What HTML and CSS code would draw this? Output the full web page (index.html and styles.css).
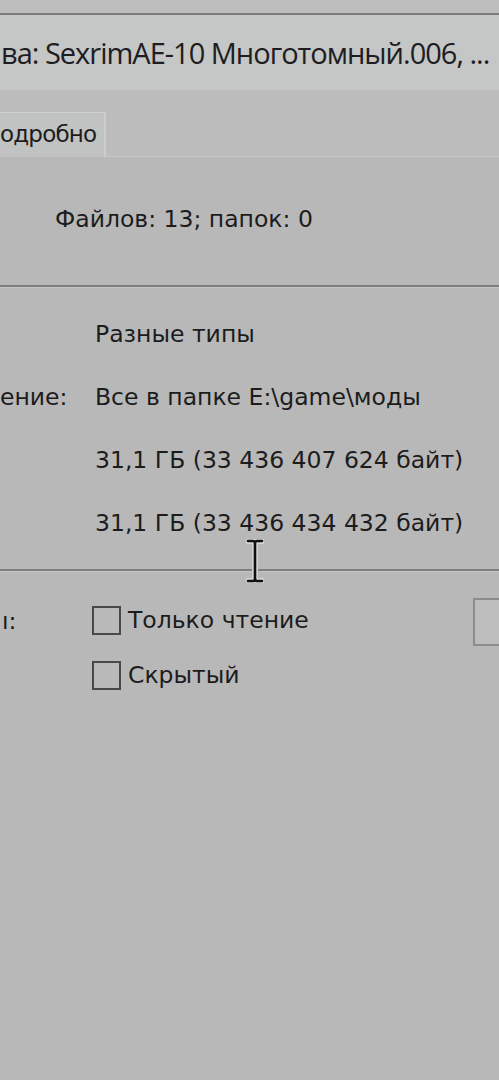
FILE: index.html
```html
<!DOCTYPE html>
<html lang="ru">
<head>
    <meta charset="UTF-8">
    <meta name="viewport" content="width=device-width, initial-scale=1.0">
    <title>Свойства</title>
    <link rel="stylesheet" href="styles.css">
</head>
<body>
    <div class="frame-top"></div>

    <!-- Window caption -->
    <div class="caption">ва: SexrimAE-10 Многотомный.006, ...</div>

    <!-- Tabs -->
    <div class="tabbar">
        <div class="tab">одробно</div>
    </div>

    <div class="panel">
        <div class="files-row">Файлов: 13; папок: 0</div>

        <div class="separator"></div>

        <div class="info">
            <div class="label"></div>
            <div class="value">Разные типы</div>
            <div class="label">ение:</div>
            <div class="value">Все в папке E:\game\моды</div>
            <div class="label"></div>
            <div class="value">31,1 ГБ (33 436 407 624 байт)</div>
            <div class="label"></div>
            <div class="value">31,1 ГБ (33 436 434 432 байт)</div>
        </div>

        <div class="separator"></div>

        <div class="attrs">
            <div class="label">ı:</div>
            <div class="checks">
                <label class="check"><span class="box"></span>Только чтение</label>
                <label class="check"><span class="box"></span>Скрытый</label>
            </div>
            <div class="side-btn"></div>
        </div>

        <!-- text cursor over the dialog -->
        <svg class="ibeam" width="18" height="44" viewBox="0 0 18 44">
            <path d="M2 2 H7 Q9 2 9 4 V40 Q9 42 7 42 H2 M16 2 H11 Q9 2 9 4 M9 40 Q9 42 11 42 H16" fill="none" stroke="#d4d4d4" stroke-width="6" stroke-linecap="round"/>
            <path d="M2 2 H7 Q9 2 9 4 V40 Q9 42 7 42 H2 M16 2 H11 Q9 2 9 4 M9 40 Q9 42 11 42 H16" fill="none" stroke="#111" stroke-width="2.6" stroke-linecap="round"/>
        </svg>
    </div>
</body>
</html>
```

FILE: styles.css
```css
body {
    margin: 0;
    padding: 0;
    background-color: #b8b8b8;
    font-family: "DejaVu Sans", Tahoma, sans-serif;
    color: #1c1c1c;
    overflow: hidden;
    height: 1080px;
}

.frame-top {
    height: 13px;
    background-color: #bdbdbd;
    border-bottom: 2px solid #7c7c7c;
}

.caption {
    height: 75px;
    box-sizing: border-box;
    padding: 21px 0 0 1px;
    background-color: #c5c6c6;
    font-family: "Open Sans", "Noto Sans", sans-serif;
    font-size: 29px;
    letter-spacing: -1px;
    line-height: 34px;
    color: #1d1d22;
    white-space: nowrap;
    overflow: hidden;
}

.tabbar {
    height: 67px;
    box-sizing: border-box;
    padding-top: 22px;
    background-color: #bcbcbc;
    border-bottom: 1px solid #c9c9c9;
}

.tab {
    width: 106px;
    height: 45px;
    box-sizing: border-box;
    padding-top: 7px;
    background-color: #c1c2c2;
    border-top: 1px solid #cfcfcf;
    border-right: 2px solid #cdcdcd;
    font-size: 23px;
    line-height: 28px;
    letter-spacing: -0.8px;
    white-space: nowrap;
    overflow: hidden;
}

.panel {
    position: relative;
}

.files-row {
    height: 128px;
    box-sizing: border-box;
    padding: 48px 0 0 55px;
    font-size: 23.5px;
    line-height: 28px;
}

.separator {
    height: 2px;
    background-color: #7e7e7e;
    border-bottom: 1px solid #c4c4c4;
}

.info {
    display: grid;
    grid-template-columns: 95px 1fr;
    grid-auto-rows: 63px;
    align-items: center;
    padding: 14px 0 15px;
    font-size: 23.5px;
    line-height: 28px;
    white-space: nowrap;
}

.attrs {
    display: flex;
    padding-top: 34px;
    font-size: 23.5px;
    line-height: 28px;
}

.attrs .label {
    width: 90px;
    padding-left: 2px;
    padding-top: 1px;
}

.checks {
    display: flex;
    flex-direction: column;
    gap: 27px;
    flex: 1;
}

.check {
    display: flex;
    align-items: center;
    gap: 7px;
    height: 28px;
}

.box {
    width: 29px;
    height: 29px;
    border: 2px solid #484848;
    background-color: #b9b9b9;
    box-sizing: border-box;
}

.side-btn {
    width: 26px;
    height: 48px;
    margin-top: -8px;
    box-sizing: border-box;
    border: 2px solid #8c8c8c;
    border-right: none;
    background-color: #bdbdbd;
}

.ibeam {
    position: absolute;
    left: 246px;
    top: 382px;
}
```
